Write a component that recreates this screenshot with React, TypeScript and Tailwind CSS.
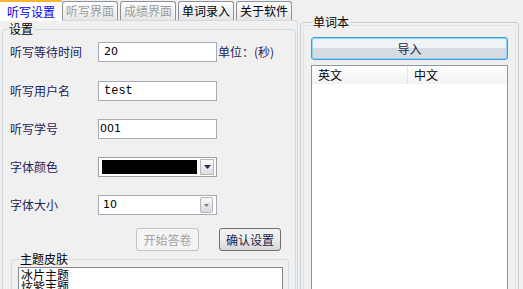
import React from "react";

const font = { fontFamily: '"Noto Sans CJK SC", "Noto Sans", sans-serif' };

function Tab({ label, cls }: { label: string; cls: string }) {
  return (
    <div
      className={`mt-[2px] h-[19px] w-[56px] rounded-t-[3px] border border-b-0 border-[#8e9199] bg-gradient-to-b from-[#fdfdfd] to-[#e6e6e6] flex items-center justify-center text-[12px] leading-none ${cls}`}
    >
      {label}
    </div>
  );
}

function Row({ label, children, mt }: { label: string; children: React.ReactNode; mt: string }) {
  return (
    <div className={`flex items-center h-[20px] ${mt}`}>
      <div className="w-[95px] pl-[7px] text-[12px] leading-none text-[#23235a]">{label}</div>
      {children}
    </div>
  );
}

export default function App() {
  return (
    <div style={font} className="w-[523px] h-[289px] bg-[#f0f0f0] overflow-hidden flex">
      {/* left column */}
      <div className="w-[298px] flex flex-col shrink-0">
        <div className="h-[20px] flex items-end">
          <div className="h-[21px] w-[62px] bg-white border-t-2 border-[#f7b538] flex items-center justify-center text-[12px] leading-none text-[#0000f0] relative top-[1px]">
            听写设置
          </div>
          <Tab label="听写界面" cls="text-[#9c9c9c]" />
          <div className="w-[2px]" />
          <Tab label="成绩界面" cls="text-[#9c9c9c]" />
          <div className="w-[2px]" />
          <Tab label="单词录入" cls="text-black" />
          <div className="w-[2px]" />
          <Tab label="关于软件" cls="text-black" />
        </div>
        <div className="flex-1 border-t border-r border-[#d6d9dc] rounded-tr-[3px] bg-[#f0f0f0]">
          <fieldset className="ml-[2px] w-[294px] border border-[#d3dbe0] rounded-[3px] mt-[1px] pb-[20px]">
            <legend className="ml-[5px] px-[1px] text-[12px] leading-[14px] text-black">设置</legend>
            <div className="pt-[6px] flex flex-col">
              <Row label="听写等待时间" mt="">
                <div className="w-[119px] h-[20px] bg-white border border-[#a5acb5] flex items-center pl-[5px] text-[12px] text-black" style={{ fontFamily: '"DejaVu Sans", sans-serif', fontSize: 11 }}>20</div>
                <div className="ml-[1px] text-[12px] leading-none text-[#23235a]">单位：(秒)</div>
              </Row>
              <Row label="听写用户名" mt="mt-[19px]">
                <div className="w-[119px] h-[20px] bg-white border border-[#a5acb5] flex items-center pl-[5px] text-[12px] text-black" style={{ fontFamily: '"Liberation Mono", monospace' }}>test</div>
              </Row>
              <Row label="听写学号" mt="mt-[18px]">
                <div className="w-[119px] h-[20px] bg-white border border-[#a5acb5] flex items-center pl-[1px] text-black" style={{ fontFamily: '"DejaVu Sans", sans-serif', fontSize: 11 }}>001</div>
              </Row>
              <Row label="字体颜色" mt="mt-[18px]">
                <div className="w-[119px] h-[20px] bg-white border border-[#a0a0a0] flex items-center pl-[3px] pr-[2px]">
                  <div className="w-[95px] h-[14px] bg-black" />
                  <div className="ml-[3px] w-[14px] h-[16px] border border-[#b6b8bc] bg-gradient-to-b from-[#fafafa] to-[#dcdde0] flex items-center justify-center">
                    <svg width="7" height="4" viewBox="0 0 7 4"><path d="M0 0H7L3.5 4Z" fill="#2a2a55" /></svg>
                  </div>
                </div>
              </Row>
              <Row label="字体大小" mt="mt-[18px]">
                <div className="w-[119px] h-[20px] bg-white border border-[#a5acb5] flex items-center pl-[4px] pr-[3px] text-black" style={{ fontFamily: '"DejaVu Sans", sans-serif', fontSize: 11 }}>
                  <span className="flex-1">10</span>
                  <div className="w-[13px] h-[16px] border border-[#b2b6bc] rounded-[2px] bg-gradient-to-b from-[#f8f8f8] to-[#d8dadd] flex items-center justify-center">
                    <svg width="5" height="3" viewBox="0 0 5 3"><path d="M0 0H5L2.5 3Z" fill="#7a7a7a" /></svg>
                  </div>
                </div>
              </Row>
              <div className="mt-[13px] flex justify-end pr-[14px] gap-[20px]">
                <div className="w-[63px] h-[23px] rounded-[3px] border border-[#bfc3c7] bg-[#f4f4f4] flex items-center justify-center text-[12px] leading-none text-[#a2a2a2]">开始答卷</div>
                <div className="w-[62px] h-[23px] rounded-[3px] border border-[#707070] bg-gradient-to-b from-[#f2f2f2] via-[#ebebeb] to-[#d6d6d6] flex items-center justify-center text-[12px] leading-none text-[#1c1c4a]">确认设置</div>
              </div>
              <fieldset className="mt-[1px] ml-[8px] mr-[6px] border border-[#d3dbe0] rounded-[3px] h-[60px]">
                <legend className="ml-[7px] px-[1px] text-[12px] leading-[14px] text-black">主题皮肤</legend>
                <div className="mt-[1px] ml-[6px] mr-[5px] h-[40px] bg-white border border-[#828790] flex flex-col pl-[2px] text-[12px] leading-[12px] text-black">
                  <div className="mt-[1px]">冰片主题</div>
                  <div>炫紫主题</div>
                </div>
              </fieldset>
            </div>
          </fieldset>
        </div>
      </div>
      {/* right column */}
      <div className="ml-[2px] w-[219px] shrink-0 flex flex-col">
        <fieldset className="mt-[15px] h-[300px] border border-[#c3d0da] rounded-[3px] px-[2px]">
          <legend className="ml-[9px] px-[1px] text-[12px] leading-[14px] text-black">单词本</legend>
          <div className="h-full border-x border-t border-[#dbe4ea] rounded-t-[2px] -mt-[4px] pt-[11px] px-[7px]">
            <div className="h-[23px] rounded-[3px] border border-[#3c9ad8] shadow-[inset_0_0_0_1px_#8fd6f5] bg-gradient-to-b from-[#f0f3f5] from-50% to-[#d5dde3] to-50% flex items-center justify-center text-[12px] leading-none text-[#1e1e46]">
              导入
            </div>
            <div className="mt-[5px] h-[240px] bg-white border border-[#8f959c]">
              <div className="h-[18px] flex bg-gradient-to-b from-[#ffffff] to-[#f1f2f4] text-[12px] leading-none text-black">
                <div className="w-[96px] pl-[6px] flex items-center border-r border-[#e2e4e7]">英文</div>
                <div className="pl-[6px] flex items-center">中文</div>
              </div>
            </div>
          </div>
        </fieldset>
      </div>
    </div>
  );
}
